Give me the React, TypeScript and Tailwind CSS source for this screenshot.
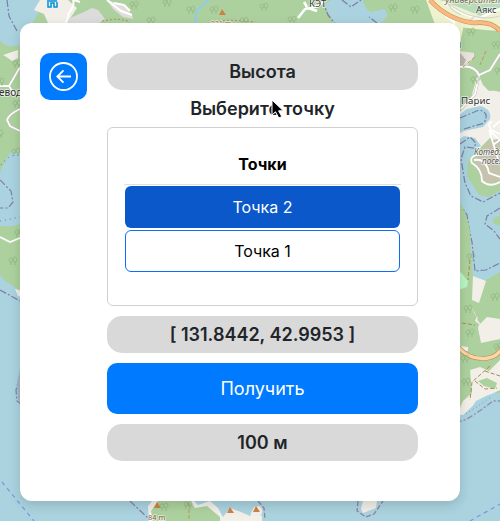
import React from "react";

const water = "#aad3df";
const forest = "#add19e";
const land = "#f2efe9";

function Tree({ x, y }: { x: number; y: number }) {
  return (
    <g transform={`translate(${x} ${y})`} fill="none" stroke="#8fb582" strokeWidth=".8">
      <path d="M2 5V8M6 5V8M2 5C-1 5 0 1 2 1S5 5 2 5M6 5C3 5 4 0 6 0S9 5 6 5" />
    </g>
  );
}

function MapBackground() {
  const trees = [
    [130, 1], [163, -1], [187, 6], [210, 6], [147, 17], [240, 17], [260, 3], [288, 16],
    [389, 4], [411, 6], [467, 28], [492, 41], [471, 76], [495, 67], [464, 305], [466, 329],
    [491, 293], [494, 343], [461, 355], [462, 378], [467, 253], [13, 60], [-4, 78], [13, 100],
    [-5, 130], [12, 148], [15, 229], [9, 257], [160, 503], [184, 501],
  ];
  return (
    <svg className="absolute inset-0" width="500" height="521" viewBox="0 0 500 521">
      <rect width="500" height="521" fill={water} />
      <path d="M40 0H500V80H20V50L33 23L40 8Z" fill={forest} />
      <path d="M40 0H68L77 8L67 23H48L44 14L34 10L40 0Z" fill={land} />
      <path d="M70 18L84 12L92 8L98 10L105 19L98 24H66Z" fill="#dcdcdc" />
      <path d="M107 0L123 5L132 15L133 19L123 17L113 9Z" fill="#e1dddc" />
      <path d="M73 0Q75 5 69 13L66 23M74 0L80 2M107 0L121 11L132 15M114 3L124 5L130 11" stroke="white" fill="none" strokeWidth="2" />
      <path d="M209 0L197 10L195 23" stroke="#91cbe7" strokeWidth="2.2" fill="none" />
      <path d="M102 21L116 19L128 21M211 22L230 20L255 22" stroke="#b18d60" strokeDasharray="2 2" fill="none" />
      <path d="M324 5L331 0H363Q365 9 371 12L384 9Q389 14 386 18L381 23H334Z" fill={water} />
      <path d="M322 0L328 15L336 25M342 0L351 7L361 0M377 23L369 17" stroke="#817da9" strokeWidth="1.3" strokeDasharray="7 2 2 2" fill="none" />
      <path d="M298 18L305 9L318 6L325 0M307 7L304 2M308 8L317 11" stroke="white" fill="none" strokeWidth="2.5" />

      <path d="M426 0H500V38H440Z" fill="#eff2ce" />
      <path d="M440 0H500V9L483 17L456 6Z" fill="#b9dbba" />
      <path d="M444 2Q461 15 479 18L500 9M438 9L454 22L460 38" stroke="white" fill="none" strokeWidth="2.5" />
      <path d="M446 0Q449 9 461 15M449 4Q474 23 500 16M465 24L474 17" stroke="#d6d6c9" strokeWidth="1.2" fill="none" />
      <path d="M460 0L464 2L468 0Z" fill="#1685d0" />
      <path d="M455 26Q468 29 500 31V145H455Z" fill={forest} />
      <path d="M455 23L464 24L460 44H455Z" fill="#eff2ce" />
      <path d="M430 0Q448 20 474 23Q492 21 500 31" stroke="#c59368" strokeWidth="4.6" fill="none" />
      <path d="M430 0Q448 20 474 23Q492 21 500 31" stroke="#fcb97e" strokeWidth="3.4" fill="none" />

      <path d="M460 51L474 53L474 57L466 67H455Z" fill="#e9e3de" />
      <path d="M457 49L466 60L462 68L456 66Z" fill="#bdb6ad" />
      <path d="M478 73L487 89L500 92V150H457V116L471 98Z" fill={land} />
      <path d="M479 76L500 57V90L489 91L483 85Z" fill={forest} />
      <path d="M456 68Q473 63 479 75L490 70L500 54M479 76L475 94L461 109" stroke="#c0bdb8" strokeWidth="2.8" fill="none" />
      <path d="M456 68Q473 63 479 75L490 70L500 54M479 76L475 94L461 109" stroke="white" strokeWidth="1.8" fill="none" />
      <path d="M486 51L480 65M475 57L463 67" stroke="#ba9761" strokeWidth="1" strokeDasharray="4 2" fill="none" />
      <path d="M455 118L467 109L480 106Q492 109 490 119L483 127L464 131L455 136Z" fill={water} />
      <path d="M455 142L464 136L475 138L481 146L470 153L468 166L480 180L485 190L500 190V282H455V195L460 192Z" fill={water} />
      <path d="M468 160L490 138L500 142V191L489 197L479 195L467 176Z" fill={forest} />
      <path d="M475 158L488 142L500 138V182L484 183L475 167Z" fill="#c5c3ae" />
      <path d="M492 122Q487 123 491 130L500 134M490 131L500 140M493 127L500 121M492 154Q467 153 472 163Q482 169 482 181Q490 188 500 182M474 160Q486 158 489 173L500 177M489 130L498 159M493 145L500 140" stroke="white" fill="none" strokeWidth="1.8" />
      <path d="M460 118L479 110Q490 112 484 123L464 129M460 144L470 137L476 143L474 148L465 147L461 159L465 183L471 196L483 202L500 193M458 202L467 215L469 228L472 242L475 271L486 270L500 263M500 208L487 216L485 224L494 231L500 239" stroke="#817da9" strokeWidth="1.25" strokeDasharray="7 2 2 2" fill="none" />
      <path d="M500 215L493 219V223L500 226Z" fill={forest} />

      <path d="M455 199L460 202L466 215L470 230L471 252L473 276L484 281L500 272V393Q488 391 479 400L464 407L460 415H450Z" fill={forest} />
      <path d="M473 276L486 281L479 303L472 300ZM479 325L487 317L500 319V339L481 343L478 328ZM477 316L480 325L475 321ZM460 346L468 347V351H458ZM470 370L480 367L489 371L500 360V390L479 400L463 415H457L463 401L472 393Z" fill={land} />
      <path d="M478 381L487 378L497 383L495 389L484 386Z" fill={forest} />
      <path d="M454 264L468 281L467 287L455 291Z" fill="#b8f6c6" />
      <path d="M472 308L480 324M490 366L472 382L470 400M485 371L500 376M475 381L485 389L497 388M462 323L475 325M470 260L468 280" stroke="#af8950" strokeDasharray="4 2" fill="none" />
      <path d="M472 308L480 324" stroke="#e9e3dc" fill="none" />
      <path d="M458 347Q470 361 488 358Q499 356 502 347" stroke="#c08d59" strokeWidth="4.6" fill="none" />
      <path d="M458 347Q470 361 488 358Q499 356 502 347" stroke="#fcd6a4" strokeWidth="3.4" fill="none" />
      <path d="M455 422L468 413L476 401L488 395L500 393V450H455Z" fill={water} />
      <path d="M456 423L467 419L481 410L493 401L500 401" stroke="#928caf" strokeWidth="1.3" strokeDasharray="6 2 2 2" fill="none" />
      <path d="M466 414L475 408L491 397" stroke="#7d8ba1" strokeDasharray="1 3" fill="none" />

      <path d="M0 40Q6 49 20 45V291L12 285L5 281L0 275Z" fill={forest} />
      <path d="M3 55L18 50V58L12 61L8 58ZM15 289L22 291V297L18 296Z" fill={land} />
      <path d="M0 86H9L20 67M9 86L15 95M20 109Q9 114 7 120L10 126L20 131" stroke="#bbb8b0" strokeWidth="2.6" fill="none" />
      <path d="M0 86H9L20 67M9 86L15 95M20 109Q9 114 7 120L10 126L20 131M0 237L10 242L20 238" stroke="white" strokeWidth="1.8" fill="none" />
      <path d="M20 152L10 153Q4 161 0 173V226L15 226L20 223Z" fill={water} />
      <path d="M7 0L9 16L17 31M0 180L11 191L13 202L8 208L0 208M0 290L20 301M20 375L16 390L17 401L21 404M130 501L149 519" stroke="#817da9" strokeWidth="1.2" strokeDasharray="7 2 2 2" fill="none" />
      <path d="M21 364L17 383L18 399L21 405Z" fill="#9fb4c7" />
      <path d="M1 165L10 156L20 155M0 221L20 217" stroke="#788fa6" strokeWidth="1.2" strokeDasharray="1 4" fill="none" />
      <path d="M2 482L34 521M470 521L500 504" stroke="#7895ec" strokeWidth="1.2" strokeDasharray="4 4" fill="none" />

      <path d="M149 521L148 506L153 500H193L198 505L210 501L218 508L223 517L230 508L241 512L250 516H262V521Z" fill={land} />
      <path d="M153 521L151 511L158 501L190 501L195 508L207 506L220 517V521Z" fill={forest} />
      <path d="M234 501H263V510L256 516L242 512Z" fill={water} />
      <path d="M251 513L254 507L259 506Q265 510 260 517L257 521H249Z" fill={land} />
      <path d="M189 503V521" stroke="#b49a59" strokeDasharray="4 2" />
      <path d="M358 501L357 511L366 517L374 514L383 501M258 501L264 508L265 519" stroke="#967ea0" strokeWidth="1.3" strokeDasharray="5 2" fill="none" />
      <path d="M363 501H377L376 508L363 513L361 509Z" fill={land} />
      <path d="M222 9L226 15H219ZM157 502L161 508H154ZM230 507L234 513H227ZM256 506L260 512H253Z" fill="#d08046" />
      <g>{trees.map(([x, y]) => <Tree key={`${x}-${y}`} x={x} y={y} />)}</g>
      <path d="M47 1H57M48 2V7H51V3H54V7H57V2" stroke="#0092da" strokeWidth="1.5" fill="none" />
      <g fontFamily="Noto Sans, sans-serif" fill="#333" stroke="white" strokeOpacity=".7" strokeWidth="1.5" paintOrder="stroke">
        <text x="309" y="7" fontSize="9.5">КЭТ</text>
        <text x="445" y="3" fontSize="9" fontStyle="italic" fill="#776c3c">университет</text>
        <text x="476" y="13" fontSize="9.3">Аякс</text>
        <text x="461" y="104" fontSize="9.7">Парис</text>
        <text x="455" y="48" fontSize="10">й</text>
        <text x="-1" y="96" fontSize="10">евод</text>
        <g fontSize="8.2" fontStyle="italic" fill="#555">
          <text x="474" y="155">Котедж</text>
          <text x="482" y="164">посе.</text>
        </g>
        <text x="148" y="520" fontSize="7.4" fill="#805332">84 m</text>
        <text x="211" y="26" fontSize="7" fill="#a66a45">221 m</text>
      </g>
    </svg>
  );
}

function ValuePill({ children }: { children: React.ReactNode }) {
  return <div className="flex h-[37px] items-center justify-center rounded-[15px] bg-[#d9d9d9] text-lg font-semibold">{children}</div>;
}

export default function App() {
  return (
    <div className="relative h-[521px] w-[500px] overflow-hidden px-5 pt-[23px] font-['Inter',sans-serif] text-[#212529]">
      <MapBackground />
      <main className="relative flex h-[478px] w-[440px] items-start gap-5 rounded-xl bg-white px-5 pt-[30px] shadow-[0_4px_12px_rgba(0,0,0,0.15)]">
        <button aria-label="Назад" className="flex size-[47px] shrink-0 items-center justify-center rounded-[10px] bg-[#007bff] text-white">
          <svg width="29" height="29" viewBox="0 0 29 29" fill="none" stroke="currentColor" strokeWidth="1.8" className="mr-px mb-px">
            <circle cx="14.5" cy="14.5" r="13.5" />
            <path d="M22 14.5H8.5M14.5 8.3L8.3 14.5L14.5 20.7" />
          </svg>
        </button>
        <div className="w-[311px]">
          <ValuePill>Высота</ValuePill>
          <h2 className="flex h-[37px] items-center justify-center text-lg font-semibold">Выберите точку</h2>
          <section className="flex h-[179px] flex-col gap-0.5 rounded-md border border-[#d0d0d0] px-4 pt-4 text-base text-black">
            <h3 className="mb-[-1px] flex h-[41px] items-center justify-center border-b border-[#dee2e6] font-bold">Точки</h3>
            <button className="mx-px h-[42px] rounded-md bg-[#0b58ca] text-white">Точка 2</button>
            <button className="mx-px h-[42px] rounded-md border border-[#0d6efd]">Точка 1</button>
          </section>
          <div className="mt-2.5 flex flex-col gap-2.5">
            <ValuePill>[ 131.8442, 42.9953 ]</ValuePill>
            <button className="h-[51px] rounded-[10px] bg-[#007bff] text-lg text-white">Получить</button>
            <ValuePill>100 м</ValuePill>
          </div>
        </div>
      </main>
      <svg className="absolute left-[271px] top-[99px]" width="16" height="22" viewBox="0 0 16 22">
        <path d="M1 1V16L4.5 12.8L7.8 19L10.8 17.5L7.6 11.8H12.3Z" fill="black" stroke="white" />
      </svg>
    </div>
  );
}
